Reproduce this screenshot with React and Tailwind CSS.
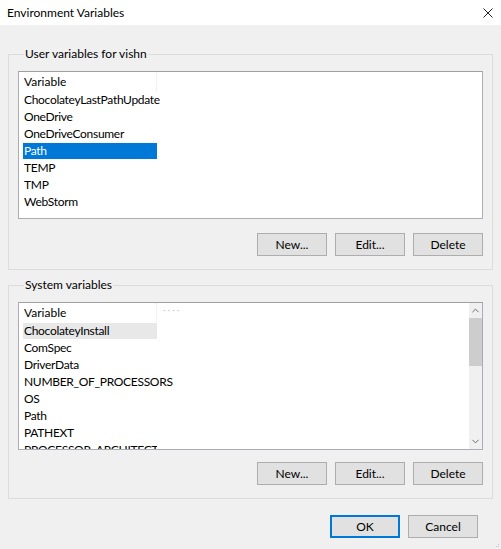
import { ChevronUp, ChevronDown } from 'lucide-react'

const USER_VARS = [
  'ChocolateyLastPathUpdate',
  'OneDrive',
  'OneDriveConsumer',
  'Path',
  'TEMP',
  'TMP',
  'WebStorm',
]

const SYSTEM_VARS = [
  'ChocolateyInstall',
  'ComSpec',
  'DriverData',
  'NUMBER_OF_PROCESSORS',
  'OS',
  'Path',
  'PATHEXT',
  'PROCESSOR_ARCHITECTURE',
]

function WinButton({ children, primary }) {
  return (
    <button
      className={`w-[70px] h-[23px] bg-[#e1e1e1] text-[12px] text-black leading-none ${
        primary ? 'border-2 border-[#0078d7]' : 'border border-[#adadad]'
      }`}
    >
      {children}
    </button>
  )
}

function VarList({ items, selected, hovered, scroll }) {
  return (
    <div className="relative h-[148px] bg-white border border-[#abadb3] border-t-[#a0a0a0] overflow-hidden flex">
      <div className="flex-1 min-w-0 overflow-hidden">
        {/* header */}
        <div className="flex h-[19px] items-center">
          <div className="w-[138px] h-full flex items-center pl-[5px] border-r border-dotted border-[#e5e5e5]">
            Variable
          </div>
          <div className="pl-[6px] text-[#c8c8c8] tracking-[2px] leading-none -mt-[8px] text-[10px]">
            {scroll ? '····' : ''}
          </div>
        </div>
        {items.map((name, i) => (
          <div key={name} className="h-[17px] pl-[4px] flex items-end">
            <div
              className={`w-[134px] h-[16px] pl-[1px] flex items-center whitespace-nowrap tracking-[-0.3px] ${
                i === items.length - 1 && scroll ? 'overflow-hidden' : ''
              } ${
                name === selected
                  ? 'bg-[#0078d7] text-white'
                  : name === hovered
                    ? 'bg-[#e8e8e8]'
                    : ''
              }`}
            >
              {name}
            </div>
          </div>
        ))}
      </div>
      {scroll && (
        <div className="w-[13px] bg-[#f0f0f0] flex flex-col items-center">
          <div className="h-[15px] flex items-center justify-center text-[#606060]">
            <ChevronUp size={11} strokeWidth={2} />
          </div>
          <div className="w-full h-[48px] bg-[#cdcdcd]" />
          <div className="flex-1" />
          <div className="h-[15px] flex items-center justify-center text-[#606060]">
            <ChevronDown size={11} strokeWidth={2} />
          </div>
        </div>
      )}
    </div>
  )
}

function GroupBox({ label, children }) {
  return (
    <fieldset className="border border-[#dcdcdc] px-[9px] pt-[9px] pb-[13px] mx-[8px]">
      <legend className="ml-[6px] px-[1px] leading-[16px]">{label}</legend>
      {children}
    </fieldset>
  )
}

export default function App() {
  return (
    <div
      className="w-[501px] h-[549px] bg-[#f0f0f0] text-[12px] text-black flex flex-col relative"
      style={{ fontFamily: 'Lato, "Noto Sans", sans-serif' }}
    >
      {/* title bar */}
      <div className="h-[25px] bg-white flex items-center justify-between pl-[7px] pr-[8px] shrink-0">
        <span>Environment Variables</span>
        <svg width="10" height="10" viewBox="0 0 10 10" className="text-[#222]">
          <path d="M0.5 0.5 L9.5 9.5 M9.5 0.5 L0.5 9.5" stroke="currentColor" strokeWidth="1" />
        </svg>
      </div>

      <div className="mt-[21px]">
        <GroupBox label="User variables for vishn">
          <VarList items={USER_VARS} selected="Path" />
          <div className="flex justify-end gap-[8px] mt-[14px]">
            <WinButton>New...</WinButton>
            <WinButton>Edit...</WinButton>
            <WinButton>Delete</WinButton>
          </div>
        </GroupBox>
      </div>

      <div className="mt-[7px]">
        <GroupBox label="System variables">
          <VarList items={SYSTEM_VARS} hovered="ChocolateyInstall" scroll />
          <div className="flex justify-end gap-[8px] mt-[12px]">
            <WinButton>New...</WinButton>
            <WinButton>Edit...</WinButton>
            <WinButton>Delete</WinButton>
          </div>
        </GroupBox>
      </div>

      <div className="flex justify-end gap-[8px] mt-[16px] pr-[23px]">
        <WinButton primary>OK</WinButton>
        <WinButton>Cancel</WinButton>
      </div>

      {/* resize grip */}
      <div className="absolute right-[2px] bottom-[2px] w-[3px] h-[3px] border-r border-b border-dotted border-[#c0c0c0]" />
    </div>
  )
}
